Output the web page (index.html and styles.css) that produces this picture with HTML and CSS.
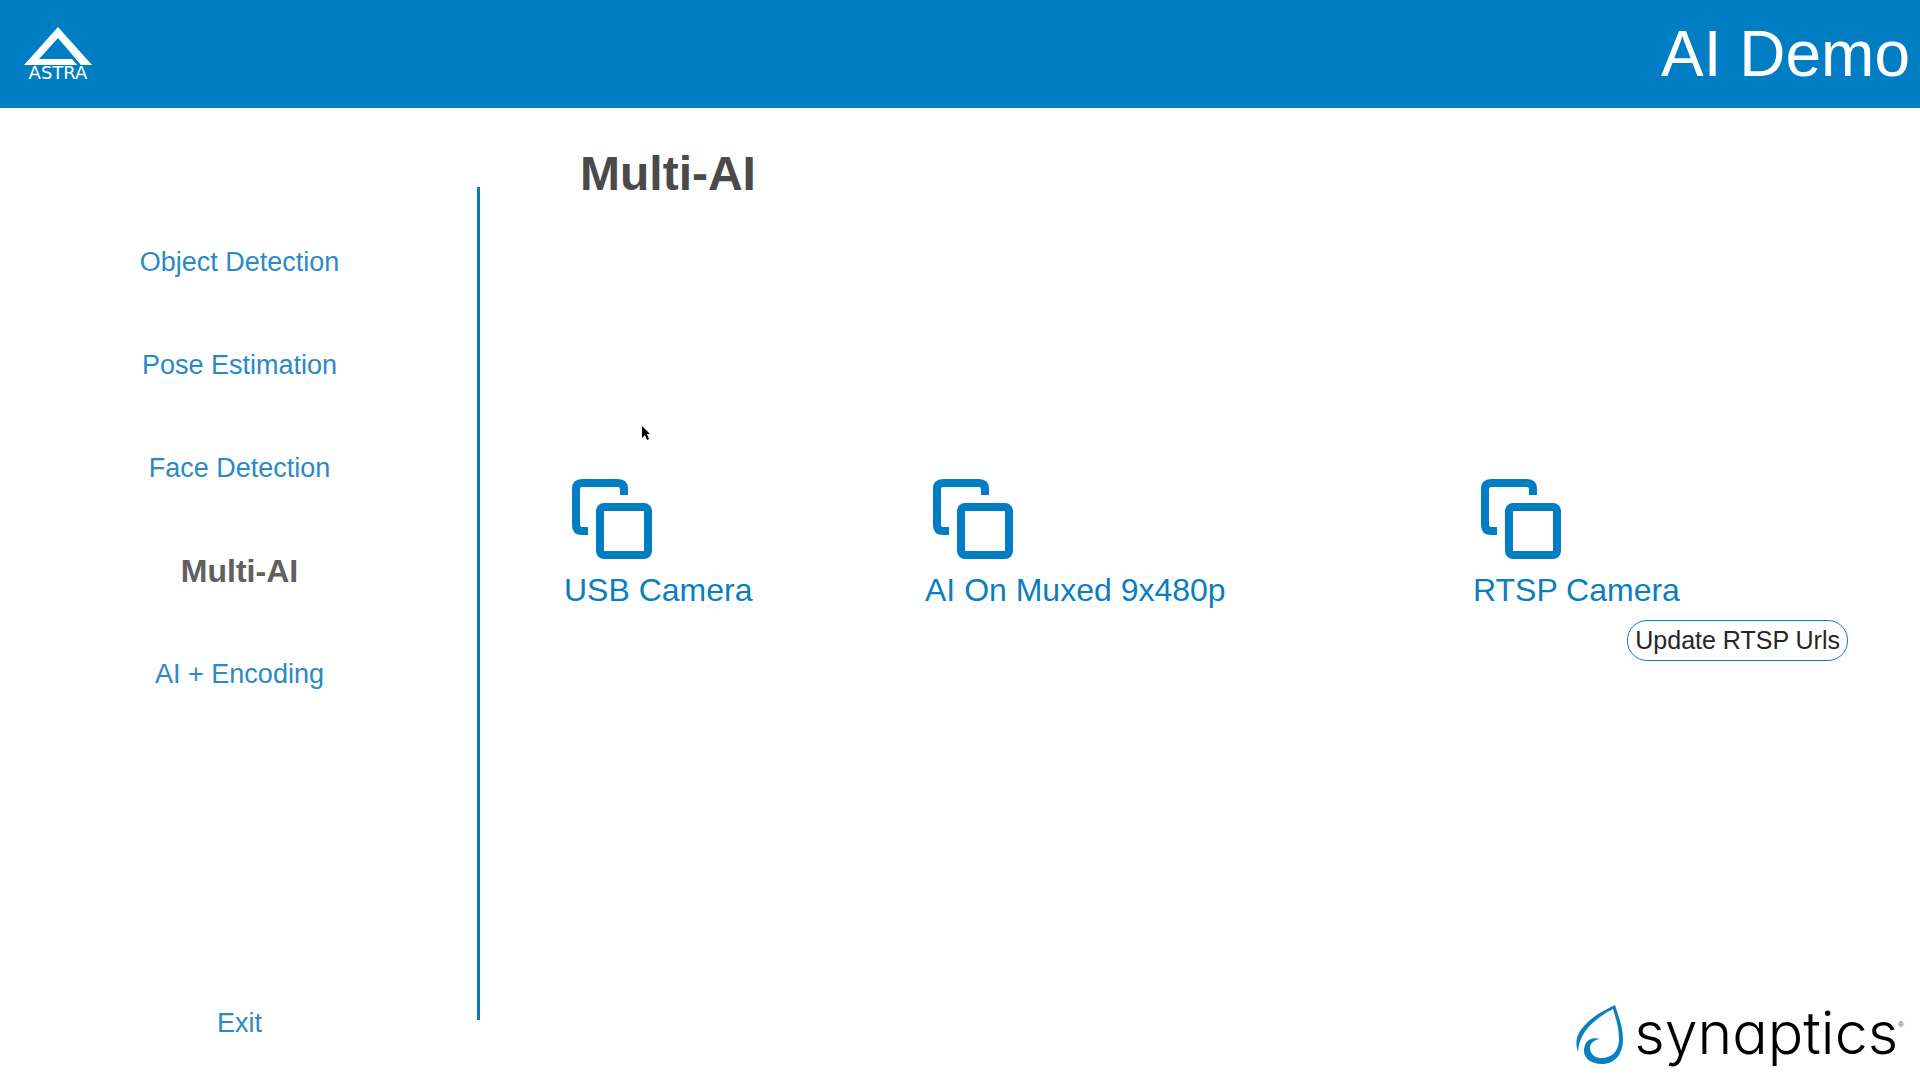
FILE: index.html
```html
<!DOCTYPE html>
<html lang="en">
<head>
<meta charset="utf-8">
<title>AI Demo</title>
<link rel="stylesheet" href="styles.css">
</head>
<body>
<header class="topbar">
  <div class="astra">
    <svg class="astra-mark" viewBox="0 0 68 38" aria-hidden="true"><path d="M34 0L68 38H57L34 11L15 32H48L53 38H0Z" fill="#fff"/></svg>
    <span class="astra-name">ASTRA</span>
  </div>
  <p class="app-title">AI Demo</p>
</header>
<div class="page">
  <aside class="sidebar">
    <nav class="menu">
      <a class="menu-item" href="#object">Object Detection</a>
      <a class="menu-item" href="#pose">Pose Estimation</a>
      <a class="menu-item" href="#face">Face Detection</a>
      <a class="menu-item active" href="#multi" aria-current="page">Multi-AI</a>
      <a class="menu-item" href="#encoding">AI + Encoding</a>
    </nav>
    <a class="menu-item" href="#exit">Exit</a>
  </aside>
  <main class="content">
    <h1 class="heading">Multi-AI</h1>
    <div class="sources">
      <div class="source">
        <a class="source-link" href="#usb">
          <svg class="source-icon" viewBox="0 0 80 80" aria-hidden="true"><path d="M16 52H10Q4 52 4 46V10Q4 4 10 4H46Q52 4 52 10V16"/><rect x="28" y="28" width="48" height="48" rx="4"/></svg>
          <span>USB Camera</span>
        </a>
      </div>
      <div class="source">
        <a class="source-link" href="#muxed">
          <svg class="source-icon" viewBox="0 0 80 80" aria-hidden="true"><path d="M16 52H10Q4 52 4 46V10Q4 4 10 4H46Q52 4 52 10V16"/><rect x="28" y="28" width="48" height="48" rx="4"/></svg>
          <span>AI On Muxed 9x480p</span>
        </a>
      </div>
      <div class="source">
        <a class="source-link" href="#rtsp">
          <svg class="source-icon" viewBox="0 0 80 80" aria-hidden="true"><path d="M16 52H10Q4 52 4 46V10Q4 4 10 4H46Q52 4 52 10V16"/><rect x="28" y="28" width="48" height="48" rx="4"/></svg>
          <span>RTSP Camera</span>
        </a>
        <button class="update" type="button">Update RTSP Urls</button>
      </div>
    </div>
    <div class="brand">
      <svg class="brand-drop" viewBox="0 0 48 60" aria-hidden="true"><path fill="#0b7fc3" d="M39 0C42 10 47 22 47 34C47 49 39 59 26 59C15 59 8 53 8 46C8 37 14 31 24 34C17 35 14 39 14 43C14 49 19 53 25 53C37 53 43 45 43 34C43 23 40 14 37 4C22 12 3 25 2 47C-2 35 2 27 9 20C18 10 29 5 39 0Z"/></svg>
      <span class="brand-name">synaptics</span><span class="brand-reg">®</span>
    </div>
  </main>
</div>
<svg class="pointer" viewBox="0 0 8 14" aria-hidden="true"><path d="M0 0L8 8H5L7 13L5 14L3 9L0 12Z"/></svg>
</body>
</html>
```
FILE: styles.css
```css
* { box-sizing: border-box; }

body {
  display: flex;
  flex-direction: column;
  min-height: 100vh;
  margin: 0;
  background: #fefefe;
  font-family: "Liberation Sans", Arial, sans-serif;
}

a { text-decoration: none; }

.topbar {
  display: flex;
  justify-content: space-between;
  align-items: center;
  height: 108px;
  padding: 0 10px;
  background: #007dc3;
  color: #fff;
}

.astra {
  display: flex;
  flex-direction: column;
  align-items: center;
  width: 96px;
}

.astra-mark { width: 68px; height: 38px; }

.astra-name {
  font: 400 18px/16px "DejaVu Sans", sans-serif;
}

.app-title {
  margin: 0;
  font-size: 64px;
  line-height: 72px;
}

.page {
  display: grid;
  grid-template-columns: 25% 1fr;
  flex: 1;
}

.sidebar {
  display: flex;
  flex-direction: column;
  justify-content: space-between;
  margin-top: 79px;
  padding: 0 1px 5px 0;
  text-align: center;
  background: linear-gradient(#0b7bb5, #0b7bb5) right top / 3px calc(100% - 60px) no-repeat;
}

.menu { padding-top: 24px; }

.menu-item {
  display: block;
  color: #2b89c4;
  font-size: 27px;
  line-height: 103px;
}

.menu-item.active {
  color: #606060;
  font-size: 32px;
  font-weight: bold;
}

.content {
  display: flex;
  flex-direction: column;
  justify-content: space-between;
}

.heading {
  margin: 38px 100px 0;
  color: #4a4a4a;
  font-size: 48px;
  line-height: 56px;
}

.sources {
  display: grid;
  grid-template-columns: 361fr 548fr 375fr;
  margin: 0 72px 68px 84px;
}

.source {
  display: flex;
  flex-direction: column;
  align-items: flex-start;
  gap: 11px;
}

.source-link {
  display: flex;
  flex-direction: column;
  gap: 13px;
  color: #0b7ebf;
  font-size: 32px;
  line-height: 37px;
}

.source-icon {
  width: 80px;
  height: 80px;
  margin-left: 8px;
  fill: none;
  stroke: #007dc3;
  stroke-width: 8px;
}

.update {
  align-self: flex-end;
  height: 41px;
  padding: 0 7px;
  border: 1px solid #0b7ebf;
  border-radius: 20px;
  background: #fefefe;
  color: #262626;
  font-family: inherit;
  font-size: 25px;
}

.brand {
  display: flex;
  align-items: center;
  align-self: flex-end;
  height: 60px;
  margin: 0 16px 15px 0;
}

.brand-drop { width: 48px; height: 60px; margin-right: 10px; }

.brand-name {
  padding-bottom: 4px;
  color: #000;
  font: 300 59px/56px Inter, "Open Sans", sans-serif;
  font-feature-settings: "cv11";
}

.brand-reg {
  align-self: flex-start;
  padding-top: 14px;
  color: #555;
  font-size: 8px;
  line-height: 12px;
}

.pointer {
  position: absolute;
  top: 426px;
  left: 642px;
  width: 8px;
  height: 14px;
}
```
